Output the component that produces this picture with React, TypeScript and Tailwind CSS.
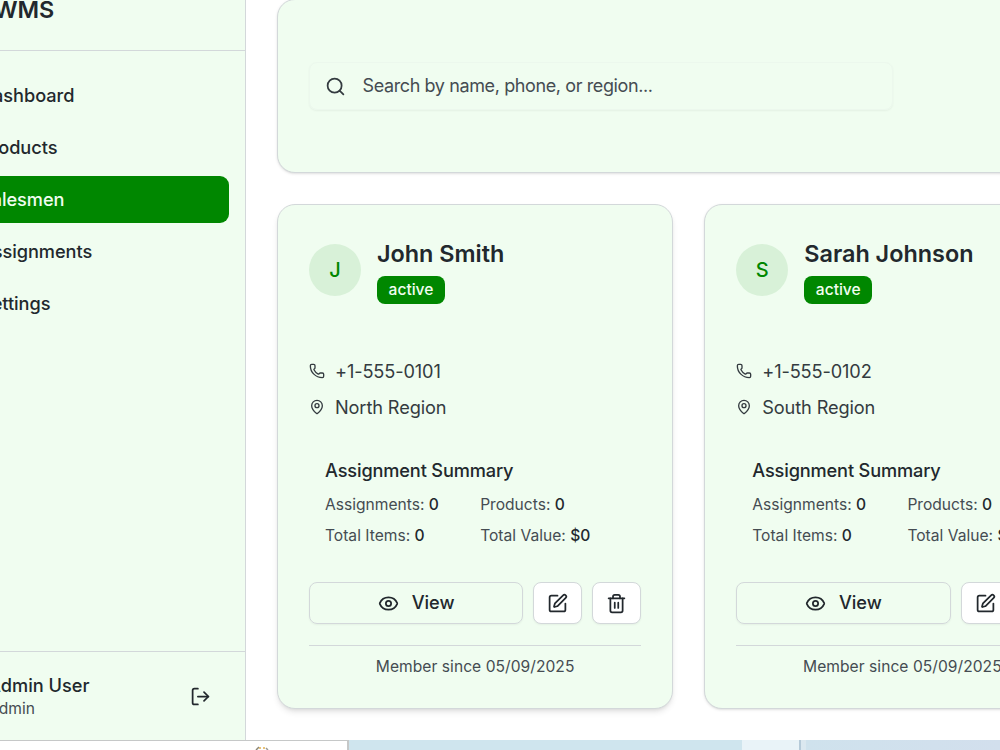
import { Eye, LogOut, MapPin, Phone, Search, SquarePen, Trash2 } from "lucide-react";

const navItems = ["Dashboard", "Products", "Salesmen", "Assignments", "Settings"];

const salesmen = [
  { name: "John Smith", phone: "+1-555-0101", region: "North Region", shadow: "shadow-md" },
  { name: "Sarah Johnson", phone: "+1-555-0102", region: "South Region", shadow: "shadow-sm" },
];

function Sidebar() {
  return (
    <aside className="-ml-[87px] flex w-[333px] shrink-0 flex-col border-r border-[#d3d8da] bg-[#f0fdf0]">
      <div className="flex h-[51px] items-start border-b border-[#d3d8da] pl-[68px]">
        <h1 className="-mt-1.5 text-[23.4px] leading-[31px] font-semibold">LWMS</h1>
      </div>
      <nav className="flex flex-1 flex-col gap-[5px] px-4 pt-[21px]">
        {navItems.map((label) => (
          <a
            key={label}
            className={`flex h-[47px] items-center rounded-[9px] pl-[51px] text-[18.2px] font-medium tracking-[-0.06px] ${
              label === "Salesmen" ? "bg-[#008700] text-[#f0fdf0]" : ""
            }`}
          >
            {label}
          </a>
        ))}
      </nav>
      <div className="flex h-[89px] items-center justify-between border-t border-[#d3d8da] pr-[34px] pl-[75px]">
        <div>
          <p className="text-[18.2px] leading-[25px] font-medium">Admin User</p>
          <p className="text-[15.6px] leading-[22px] text-[#454c52]">Admin</p>
        </div>
        <LogOut className="size-[21px]" />
      </div>
    </aside>
  );
}

function Stat({ label, value }: { label: string; value: string }) {
  return (
    <p className="text-[15.6px] leading-[21px] text-[#454c52]">
      {label} <span className="font-medium text-[#22282d]">{value}</span>
    </p>
  );
}

function SalesmanCard({ person }: { person: (typeof salesmen)[number] }) {
  return (
    <article
      className={`h-[505px] rounded-[18px] border border-[#d3d8da] bg-[#f0fdf0] px-[31px] pt-[31px] ${person.shadow}`}
    >
      <div className="flex h-[68px] items-center gap-4">
        <div className="flex size-[52px] items-center justify-center rounded-full bg-[#d8f1d8] text-[20px] font-medium text-[#008700]">
          {person.name[0]}
        </div>
        <div className="pt-px">
          <h3 className="text-[23.4px] leading-[32px] font-semibold">{person.name}</h3>
          <span className="mt-[6px] flex h-7 w-[68px] items-center justify-center rounded-[8px] bg-[#008700] text-[15.6px] font-medium text-[#f0fdf0]">
            active
          </span>
        </div>
      </div>

      <div className="mt-[54px] flex flex-col gap-[10px] text-[18.2px] leading-[26px] tracking-[-0.12px] text-[#343b40]">
        <div className="flex items-center gap-[10px]">
          <Phone className="size-4" />
          <span>{person.phone}</span>
        </div>
        <div className="flex items-center gap-[10px]">
          <MapPin className="size-4" />
          <span>{person.region}</span>
        </div>
      </div>

      <div className="mt-[37px] px-4">
        <h4 className="text-[18.2px] leading-[26px] font-medium tracking-[-0.15px]">Assignment Summary</h4>
        <div className="mt-[11px] grid grid-cols-2 gap-[10px]">
          <Stat label="Assignments:" value="0" />
          <Stat label="Products:" value="0" />
          <Stat label="Total Items:" value="0" />
          <Stat label="Total Value:" value="$0" />
        </div>
      </div>

      <div className="mt-9 flex gap-[10px]">
        <button className="flex h-[42px] flex-1 items-center justify-center gap-[13px] rounded-[8px] border border-[#d3d8da] text-[18.2px] font-medium shadow-xs">
          <Eye className="size-[21px]" />
          View
        </button>
        <button className="flex h-[42px] w-[49px] items-center justify-center rounded-[8px] border border-[#d3d8da] bg-white shadow-xs">
          <SquarePen className="size-[21px]" />
        </button>
        <button className="flex h-[42px] w-[49px] items-center justify-center rounded-[8px] border border-[#d3d8da] bg-white shadow-xs">
          <Trash2 className="size-[21px]" />
        </button>
      </div>

      <p className="mt-[21px] border-t border-[#d3d8da] pt-[10px] text-center text-[15.6px] leading-[21px] tracking-[0.04px] text-[#454c52]">
        Member since 05/09/2025
      </p>
    </article>
  );
}

export default function App() {
  return (
    <div className="flex h-[750px] w-[1000px] flex-col overflow-hidden bg-white font-['Inter',sans-serif] text-[#22282d]">
      <div className="flex h-[740px] shrink-0">
        <Sidebar />
        <main className="min-w-0 flex-1 overflow-hidden pl-[31px]">
          <section className="-mt-px flex h-[174px] w-[1250px] items-center rounded-[18px] border border-[#d3d8da] bg-[#f0fdf0] px-[31px] shadow-sm">
            <div className="flex h-12 w-[584px] items-center gap-[17px] rounded-[8px] border border-[#ecf8ed] px-[14.5px] shadow-xs">
              <Search className="size-[21px] text-[#343b40]" />
              <span className="pb-[2px] text-[18px] tracking-[-0.39px] text-[#454c52]">
                Search by name, phone, or region...
              </span>
            </div>
          </section>
          <div className="mt-[31px] grid w-[823.5px] grid-cols-2 gap-[31px]">
            {salesmen.map((person) => (
              <SalesmanCard key={person.name} person={person} />
            ))}
          </div>
        </main>
      </div>

      {/* Desktop strip below the window */}
      <div className="flex h-[10px] shrink-0">
        <div className="flex w-[349px] border-t border-r-2 border-[#c6c8c8] bg-white pt-[5px] pl-[255px]">
          <svg width="14" height="4" viewBox="0 0 14 4">
            <path d="M1 4 4 1" stroke="#8a8676" strokeWidth="1.5" />
            <path d="M5 3V1M9 3V1" stroke="#dfb04f" strokeWidth="1.5" />
            <path d="m11 2 2 2" stroke="#9a9a96" strokeWidth="1.5" />
          </svg>
        </div>
        <div className="w-[393px] bg-[#cfe5ee]" />
        <div className="w-[57px] bg-[#e9f3f8]" />
        <div className="w-[2px] bg-[#b5cad9]" />
        <div className="w-[5px] bg-[#dbe8f0]" />
        <div className="flex-1 bg-gradient-to-r from-[#cfe2ed] to-[#d2dfed]" />
      </div>
    </div>
  );
}
